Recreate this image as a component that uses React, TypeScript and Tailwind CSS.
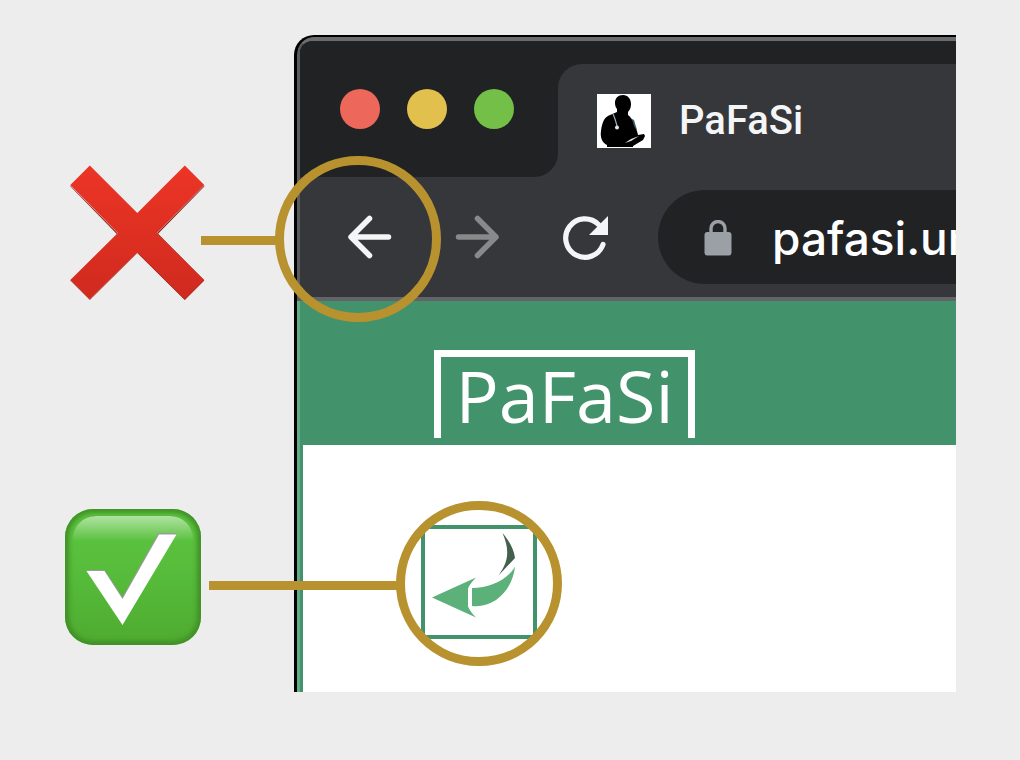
import React from 'react';

function CrossMark() {
  return (
    <svg viewBox="0 0 136 136" className="h-[136px] w-[136px]" role="img" aria-label="Wrong">
      <defs>
        <linearGradient id="cross" x1="0" y1="0" x2="0" y2="1">
          <stop offset="0" stopColor="#ec3526" />
          <stop offset="1" stopColor="#cf2a1e" />
        </linearGradient>
      </defs>
      <g transform="translate(.3 -.5)">
        <path d="M1 116 20.500 135.500 68 88.500 115.500 135.500 135 116 88 68.500 135 21 88 69 68 88 20.500 135 1 115.500Z" fill="#7c1b14" />
        <path d="M1 21 48 68.500V70L1 21.800ZM88 68.500 135 21V22L88.500 69.500Z" fill="#7c1b14" />
        <path d="M20.500 1 68 48.500 115.500 1 135 20.500 87.500 68.500 135 115.500 115.500 135 68 88 20.500 135 1 115.500 48.500 68.500 1 20.500Z" fill="url(#cross)" />
      </g>
    </svg>
  );
}

function CheckMark() {
  return (
    <svg viewBox="0 0 136 136" className="h-[136px] w-[136px]" role="img" aria-label="Right">
      <defs>
        <linearGradient id="tile" x1="0" y1="0" x2="0" y2="1">
          <stop offset="0" stopColor="#5cc540" />
          <stop offset=".4" stopColor="#58be3c" />
          <stop offset="1" stopColor="#4eab30" />
        </linearGradient>
        <linearGradient id="gloss" x1="0" y1="0" x2="0" y2="1">
          <stop offset="0" stopColor="#fff" stopOpacity=".52" />
          <stop offset="1" stopColor="#fff" stopOpacity="0" />
        </linearGradient>
        <clipPath id="tileClip">
          <rect width="136" height="136" rx="28" />
        </clipPath>
        <filter id="soft">
          <feGaussianBlur stdDeviation="2.500" />
        </filter>
      </defs>
      <g clipPath="url(#tileClip)">
        <rect width="136" height="136" fill="url(#tile)" />
        <rect width="136" height="136" rx="28" fill="none" stroke="#3f8f26" strokeWidth="8" filter="url(#soft)" />
        <path d="M7 32C9 15 18 7 34 7h68c16 0 25 8 27 25Z" fill="url(#gloss)" />
      </g>
      <path d="M21 61H39.500L57.500 88 93.500 24H112L57.500 114Z" fill="#9b9b9b" />
      <path d="M21.500 62H39.500L57.500 90 94 25.500H111.500L57.500 116Z" fill="#fff" />
    </svg>
  );
}

function Favicon() {
  return (
    <svg viewBox="0 0 54 54" className="h-[54px] w-[54px] shrink-0" aria-hidden="true">
      <path d="M0 0h54v54H0Z" fill="#fff" />
      <path d="M31 23 37 26 40 36 34 37Z" fill="#3c5a70" />
      <path d="M26 1c5 0 8 4 8 9 0 3-1 6-3 8v3c3 2 5 6 6 11l3 5 1 4 6-1 1 2-2 4-10 6v1H10v-2C5 49 3 43 4 37c1-8 3-14 9-16l7-3v-3c-1-1-2-3-2-6 0-5 3-8 8-8Z" fill="#000" />
      <path d="M16 20c2 4 3 8 4 12" fill="none" stroke="#9eb1bd" strokeWidth="1.200" />
      <circle cx="20" cy="33.500" r="2" fill="#dbe6ec" />
      <path d="M28 49 34 45 42 42 34 47Z" fill="#dfe5e9" />
    </svg>
  );
}

function ArrowIcon({ flipped = false }: { flipped?: boolean }) {
  return (
    <svg viewBox="0 0 46 46" className={flipped ? 'h-[46px] w-[46px] -scale-x-100' : 'h-[46px] w-[46px]'} aria-hidden="true">
      <path d="M41.500 23H5M22.500 4.500 4 23l18.500 18.500" fill="none" stroke="currentColor" strokeWidth="5.500" strokeLinecap="round" strokeLinejoin="round" />
    </svg>
  );
}

function ReloadIcon() {
  return (
    <svg viewBox="0 0 48 46" className="h-[46px] w-12" aria-hidden="true">
      <path d="M42 30.500A19.200 19.200 0 1 1 37.500 10.500" fill="none" stroke="currentColor" strokeWidth="5.200" strokeLinecap="round" />
      <path d="M47 2V21H28Z" fill="currentColor" />
    </svg>
  );
}

function LockIcon() {
  return (
    <svg viewBox="0 0 28 36" className="h-9 w-7 shrink-0 text-[#9aa0a6]" aria-hidden="true">
      <path d="M7 14V8.500a7 7 0 0 1 14 0V14" fill="none" stroke="currentColor" strokeWidth="3.400" />
      <rect x=".5" y="12" width="27" height="23.500" rx="3" fill="currentColor" />
    </svg>
  );
}

function ReturnIcon() {
  return (
    <svg viewBox="425 529 108 105" className="h-full w-full" aria-hidden="true">
      <path d="M432 597 476 577Q470 583 468 588V606Q470 611 476 617Z" fill="#5bb179" />
      <path d="M472 587.500C490 587 507 580 515 566 513 588 495 608 472 605.500Z" fill="#5bb179" />
      <path d="M502.500 532.500C509 540 514 549 515 557.500L498.500 575C507 563 511 552 502.500 532.500Z" fill="#43604f" />
    </svg>
  );
}

function TabStrip() {
  return (
    <div className="flex h-[136px] bg-[#36373a]">
      <div className="flex w-[258px] shrink-0 gap-[27px] rounded-br-3xl bg-[#212224] pt-12 pl-10">
        <button aria-label="Close" className="h-10 w-10 rounded-full bg-[#ee675b]" />
        <button aria-label="Minimize" className="h-10 w-10 rounded-full bg-[#e2c04d]" />
        <button aria-label="Zoom" className="h-10 w-10 rounded-full bg-[#73bf48]" />
      </div>
      <div className="min-w-0 flex-1 bg-[#212224] pt-[23px]">
        <div className="flex h-full items-center gap-7 rounded-tl-3xl bg-[#36373a] pl-[39px] text-[40px] text-[#f4f5f6]">
          <Favicon />
          <span className="font-['Roboto',sans-serif] font-medium">PaFaSi</span>
        </div>
      </div>
    </div>
  );
}

function Toolbar() {
  return (
    <div className="flex h-[124px] items-center border-b-4 border-[#646367] bg-[#36373a] pl-[47px] text-[#f4f5f6]">
      <button aria-label="Back">
        <ArrowIcon />
      </button>
      <button aria-label="Forward" className="ml-[61px] text-[#88898b]">
        <ArrowIcon flipped />
      </button>
      <button aria-label="Reload" className="ml-[61px]">
        <ReloadIcon />
      </button>
      <div className="ml-[49px] flex min-w-0 flex-1 items-center gap-10 overflow-hidden rounded-l-full bg-[#212224] pt-3 pb-[10px] pl-[46px]">
        <LockIcon />
        <span className="whitespace-nowrap font-['Inter',sans-serif] text-[46px] leading-[72px] font-medium text-white">pafasi.ur</span>
      </div>
    </div>
  );
}

export default function App() {
  return (
    <main className="relative flex min-h-screen bg-[#ededed] pt-[35px] pr-16 pb-[68px]">
      <div className="flex w-[294px] shrink-0 flex-col gap-[208px] pt-[130px]">
        <div className="pl-[69px]">
          <CrossMark />
        </div>
        <div className="pl-[65px]">
          <CheckMark />
        </div>
      </div>

      <section className="flex min-w-0 flex-1 overflow-hidden rounded-tl-[20px] border-t-2 border-l-[3px] border-black bg-black">
        <div className="flex min-w-0 flex-1 flex-col">
          <div className="overflow-hidden rounded-tl-2xl border-t-4 border-l-[3px] border-t-[#6b6c6e] border-l-[#5a5b5e]">
            <TabStrip />
            <Toolbar />
          </div>
          <header className="h-36 shrink-0 border-l-[3px] border-[#64ab87] bg-[#42936b] pt-[49px] pl-[134px]">
            <a href="#home" className="flex h-[88px] w-[261px] items-center justify-center border-7 border-b-0 border-white pb-[6px] font-['Open_Sans',sans-serif] text-[72px] leading-[72px] font-medium text-white">
              PaFaSi
            </a>
          </header>
          <div className="flex flex-1 border-l-[3px] border-[#64ab87]">
            <div className="flex-1 border-l-[3px] border-[#42936b] bg-white pt-20 pl-[118px]">
              <button aria-label="Return" className="block h-[114px] w-[116px] border-4 border-[#42936b]">
                <ReturnIcon />
              </button>
            </div>
          </div>
        </div>
      </section>

      <div className="absolute top-[236px] left-[201px] h-[9px] w-20 bg-[#b8922f]" />
      <div className="absolute top-[156px] left-[275px] h-[166px] w-[166px] rounded-full border-9 border-[#b8922f]" />
      <div className="absolute top-[581px] left-[209px] h-[9px] w-48 bg-[#b8922f]" />
      <div className="absolute top-[501px] left-[396px] h-[165px] w-[166px] rounded-full border-9 border-[#b8922f]" />
    </main>
  );
}
